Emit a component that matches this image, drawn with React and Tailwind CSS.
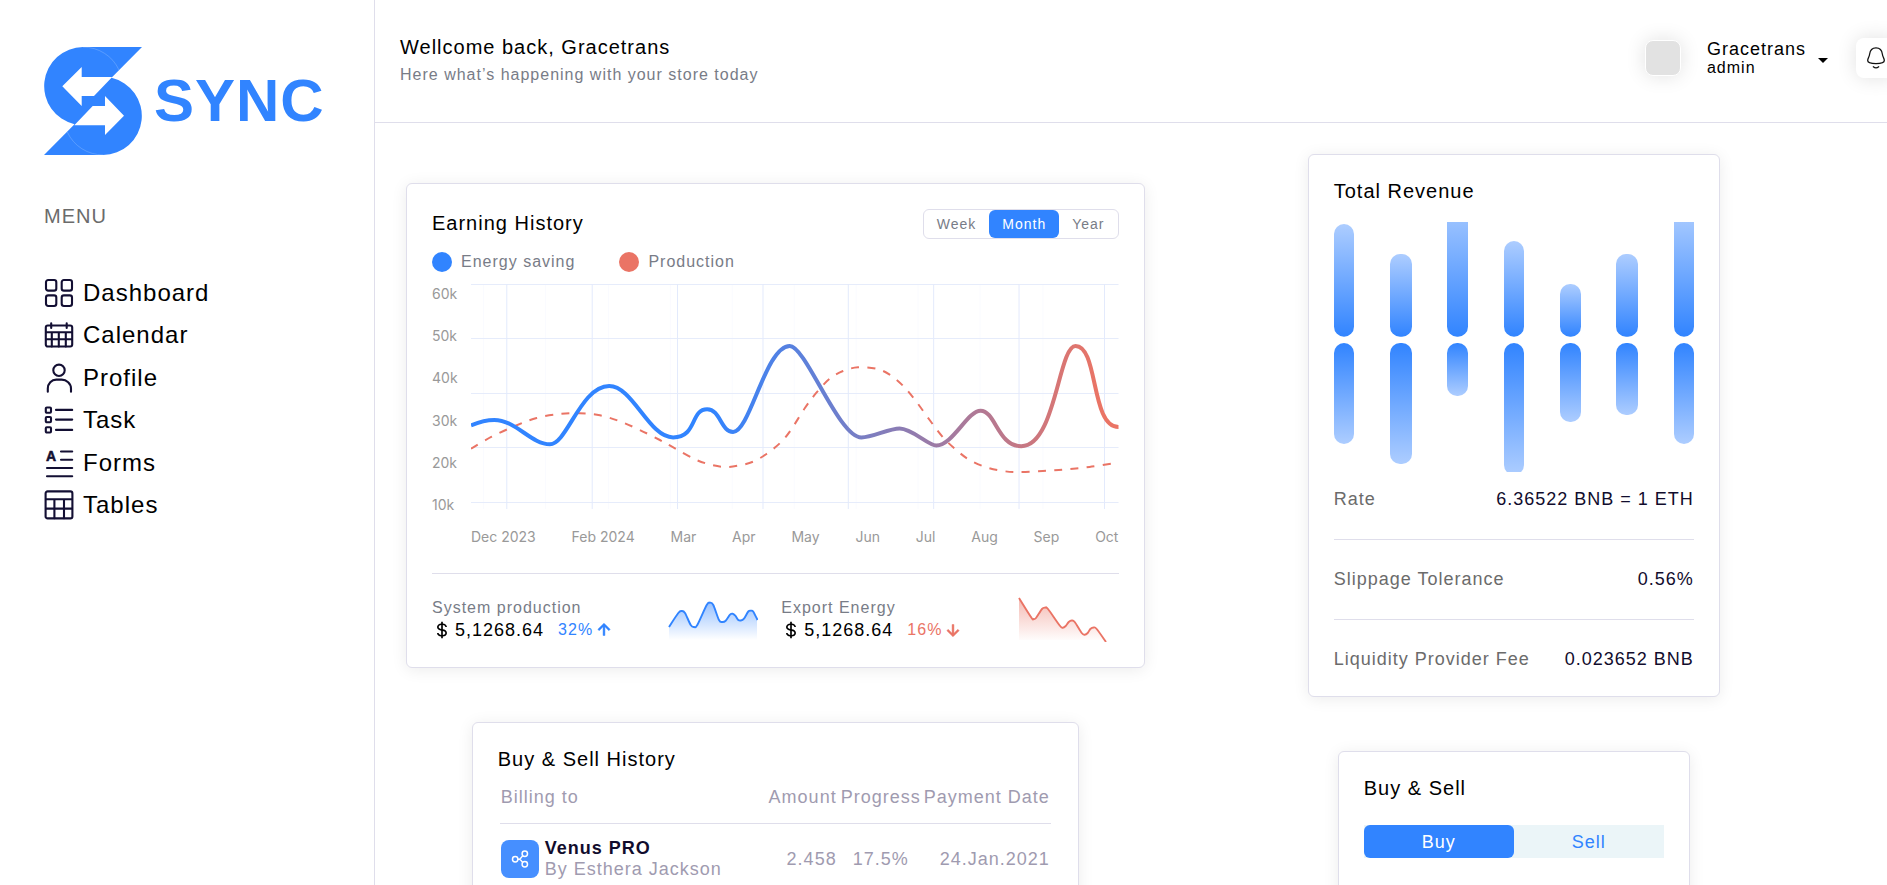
import React, { useState } from "react";
import { BiDollar, BiUpArrowAlt, BiDownArrowAlt } from "react-icons/bi";

/* Catmull-Rom spline through a list of points, as an SVG path */
function smooth(points) {
  let d = `M${points[0][0]} ${points[0][1]}`;
  for (let i = 0; i < points.length - 1; i++) {
    const a = points[i - 1] || points[i];
    const b = points[i];
    const c = points[i + 1];
    const e = points[i + 2] || c;
    d += ` C${b[0] + (c[0] - a[0]) / 6} ${b[1] + (c[1] - a[1]) / 6} ${c[0] - (e[0] - b[0]) / 6} ${c[1] - (e[1] - b[1]) / 6} ${c[0]} ${c[1]}`;
  }
  return d;
}

const SAVING =
  "M0 141.3C8 138 16 136 23.3 136C45 136 60 160.3 79 160.3C96 160.3 110 102 138.3 102C162 102 178 153.4 202.3 153.4" +
  "C226.5 153.4 219.3 125.3 236.3 125.3C249.7 125.3 250 147.9 262.3 147.9C279.3 147.9 294.9 62 319 62" +
  "C335 62 368 153.5 390.7 153.5C402 153.5 418 144.5 429 144.5C441.5 144.5 457.5 161.5 465.7 161.5" +
  "C482 161.5 497 126.7 510 126.7C525 126.7 527 162.2 550.7 162.2C585 162.2 588 62 605 62C628 62 620 143 648 143";

const PRODUCTION = [
  [0, 164.7], [20.7, 152.7], [44, 142], [65.7, 134], [89, 130], [109, 129.3], [129, 131.3], [149, 137.3], [169, 146], [189, 156],
  [205.7, 165.3], [225.7, 176], [242.3, 181.3], [255.7, 183], [269, 181.3], [282.3, 177.7], [295.7, 170], [309, 159.3],
  [319, 147.7], [334, 124.3], [345.7, 108.7], [359, 94.7], [372.3, 87], [387.3, 83.3], [405.7, 84.7], [419, 90.7],
  [432.3, 101.7], [445.7, 117.7], [459, 136], [472.3, 153.3], [485.7, 166], [499, 176], [515.7, 183.3], [532.3, 187],
  [547.3, 188], [572.3, 187], [595.7, 185.3], [619, 183], [642.3, 179.3], [648, 178],
];

const ROWS_AT = [0.5, 54.5, 109.5, 163.5, 218.5];
const COLS_AT = [35.8, 121.3, 206.7, 292.2, 377.6, 463, 548.5, 634];
const FINE_COLS_AT = [12, 74, 137, 199, 261, 323, 385, 447, 509, 572];

const SPARK_UP = [
  [1, 30], [10.3, 16], [13.7, 14], [17, 16], [22.7, 28], [26, 30], [29.3, 28], [38.7, 8], [42, 5.7], [45.3, 8], [51, 23],
  [54.3, 25], [57.7, 23.7], [62, 17.7], [64.7, 16.7], [67.3, 18.7], [70, 22.7], [72.7, 23.5], [76, 21.7], [80.3, 14.5],
  [83, 13.7], [85.3, 14.7], [89.5, 23],
];
const SPARK_DOWN = [
  [1, 1], [13.3, 20.5], [15.7, 22], [18, 21], [24, 12], [27, 10.7], [30, 12], [41.7, 28.5], [44.7, 30.7], [47.7, 29],
  [50.7, 25], [53.7, 23.5], [56.7, 25], [63.7, 36], [66.7, 37.7], [69.7, 36], [72.3, 32], [75.7, 30.5], [78.7, 32], [88, 45],
];

const BARS = [
  { x: 0, w: 20, up: 2, down: 222 },
  { x: 56, w: 22, up: 32, down: 242 },
  { x: 113, w: 21, up: -24, down: 174 },
  { x: 170, w: 20, up: 19, down: 253 },
  { x: 226, w: 21, up: 62, down: 200 },
  { x: 282, w: 22, up: 32, down: 193 },
  { x: 340, w: 20, up: -12, down: 222 },
];

const MONTHS = ["Dec 2023", "Feb 2024", "Mar", "Apr", "May", "Jun", "Jul", "Aug", "Sep", "Oct"];
const LEVELS = ["60k", "50k", "40k", "30k", "20k", "10k"];

function Icon({ children }) {
  return (
    <svg
      viewBox="0 0 30 30"
      className="size-[30px] shrink-0 text-[#130f33]"
      fill="none"
      stroke="currentColor"
      strokeWidth="2.1"
      strokeLinecap="round"
      strokeLinejoin="round"
      aria-hidden="true"
    >
      {children}
    </svg>
  );
}

const MENU = [
  {
    label: "Dashboard",
    icon: (
      <Icon>
        <rect x="2" y="2" width="10.3" height="10.6" rx="2.2" />
        <rect x="17.7" y="2" width="10.3" height="10.6" rx="2.2" />
        <rect x="2" y="17.4" width="10.3" height="10.6" rx="2.2" />
        <rect x="17.7" y="17.4" width="10.3" height="10.6" rx="2.2" />
      </Icon>
    ),
  },
  {
    label: "Calendar",
    icon: (
      <Icon>
        <rect x="1.8" y="5.5" width="26.4" height="21" rx="2" />
        <path d="M7.2 3.3V8M22.7 3.3V8M2 12.3H28M2 19.2H28M7.8 12.3V26.4M14.8 12.3V26.4M21.8 12.3V26.4" />
      </Icon>
    ),
  },
  {
    label: "Profile",
    icon: (
      <Icon>
        <circle cx="15" cy="7.3" r="5.7" />
        <path d="M3.8 28.8V25.5C3.8 20.5 7.5 16.6 12.3 16.6H17.7C22.5 16.6 27 20.5 27 25.5V28.8" />
      </Icon>
    ),
  },
  {
    label: "Task",
    icon: (
      <Icon>
        <rect x="1.8" y="2.5" width="5.2" height="5.2" rx="1" />
        <rect x="1.8" y="12" width="5.2" height="5.2" rx="1" />
        <rect x="1.8" y="22.3" width="5.2" height="5.2" rx="1" />
        <path d="M12 4.9H28.2M12 14.6H28.2M12 24.9H28.2" />
      </Icon>
    ),
  },
  {
    label: "Forms",
    icon: (
      <Icon>
        <text
          x="7"
          y="12.6"
          textAnchor="middle"
          fontSize="14"
          fontWeight="700"
          letterSpacing="0"
          fill="currentColor"
          strokeWidth="0.6"
        >
          A
        </text>
        <path d="M17 3.5H28.2M17 11.7H28.2M3 20H28.2M3 28.2H28.2" />
      </Icon>
    ),
  },
  {
    label: "Tables",
    icon: (
      <Icon>
        <rect x="1.6" y="1.4" width="26.8" height="27" rx="2" />
        <path d="M2 9.3H28M2 18.6H28M10.4 9.3V28.2M20 9.3V28.2" />
      </Icon>
    ),
  },
];

function Logo() {
  return (
    <svg viewBox="0 0 98 108" className="h-[108px] w-[98px] shrink-0" aria-hidden="true">
      <path fill="#3184ff" d="M98 0L67.5 30.8A39.1 39.1 0 0 1 59 108H0L30.5 77.2A39.1 39.1 0 0 1 39 0Z" />
      <path fill="none" stroke="#7fb2ff" strokeWidth=".5" d="M39 0.2A39 39 0 0 1 75 23M59.3 107.8A39 39 0 0 1 23.3 85" />
      <path fill="#fff" d="M18.3 39.3L37.7 20V30H68.2L50 49H37.7V59Z" />
      <path fill="#fff" d="M80 68.7L61 88V78.3H30.3L48.7 59H61V49Z" />
    </svg>
  );
}

function Sidebar() {
  return (
    <aside className="w-[375px] shrink-0 border-r border-[#dfdeeb] pt-[47px] pl-11">
      <div className="flex items-center gap-3">
        <Logo />
        <span className="text-[60px] leading-none font-bold text-[#3184ff]">SYNC</span>
      </div>
      <h2 className="mt-[47px] text-xl leading-7 text-[#6b6b6b]">MENU</h2>
      <nav className="mt-12 flex h-[242px] flex-col justify-between">
        {MENU.map((item) => (
          <a key={item.label} href="#" className="flex items-center gap-[9px] text-2xl leading-[30px] text-black">
            {item.icon}
            {item.label}
          </a>
        ))}
      </nav>
    </aside>
  );
}

function Header() {
  return (
    <header className="flex items-center justify-between border-b border-[#dfdeeb] pt-[33px] pb-[35px] pl-[25px]">
      <div className="flex flex-col gap-0.5">
        <h1 className="text-xl leading-7">Wellcome back, Gracetrans</h1>
        <p className="text-base leading-6 text-[#787c87]">Here what’s happening with your store today</p>
      </div>
      <div className="-mr-[9px] mb-1 flex shrink-0 items-center">
        <div className="size-9 rounded-lg border border-white bg-[#e2e2e2] shadow-[0_0_20px_rgba(0,0,0,0.12)]" />
        <button type="button" className="ml-[26px] flex items-center gap-3 text-left">
          <span className="flex flex-col">
            <span className="text-lg leading-5">Gracetrans</span>
            <span className="text-base leading-[18px]">admin</span>
          </span>
          <svg viewBox="0 0 10 5" className="mt-1 h-[5px] w-2.5" aria-hidden="true">
            <path d="M0 0H10L5 5Z" />
          </svg>
        </button>
        <button
          type="button"
          aria-label="Notifications"
          className="ml-7 flex size-10 items-center justify-center rounded-lg bg-white shadow-[0_0_20px_rgba(0,0,0,0.12)]"
        >
          <svg viewBox="0 0 24 24" className="size-6" fill="none" stroke="#111" strokeWidth="1.3" strokeLinecap="round" aria-hidden="true">
            <path d="M12 1.8C8 1.8 6 4.6 5.6 8.2C5.3 11 3.7 12.3 3.7 14.6C3.7 17 7 17.7 12 17.7S20.3 17 20.3 14.6C20.3 12.3 18.7 11 18.4 8.2C18 4.6 16 1.8 12 1.8Z" />
            <path d="M9.3 20.8Q12 23 14.7 20.8" />
          </svg>
        </button>
      </div>
    </header>
  );
}

function Card({ className, children }) {
  return (
    <section className={`rounded-md border border-[#dfdeeb] bg-white p-[25px] shadow-[0_2px_16px_rgba(0,0,0,0.08)] ${className}`}>
      {children}
    </section>
  );
}

function Range() {
  const [active, setActive] = useState("Month");
  return (
    <div className="flex h-[30px] rounded-md border border-[#dfdeeb] text-sm">
      {["Week", "Month", "Year"].map((name) => (
        <button
          key={name}
          type="button"
          aria-pressed={active === name}
          onClick={() => setActive(name)}
          className={active === name ? "rounded-md bg-[#3184ff] px-[13px] text-white" : "rounded-md px-[13px] text-[#787c87]"}
        >
          {name}
        </button>
      ))}
    </div>
  );
}

function EarningChart() {
  return (
    <svg viewBox="0 0 648 226" preserveAspectRatio="none" className="h-[226px] w-full" fill="none" role="img" aria-label="Earning history">
      <defs>
        <linearGradient id="earning" gradientUnits="userSpaceOnUse" x1="0" y1="0" x2="648" y2="0">
          <stop offset="0.37" stopColor="#3184ff" />
          <stop offset="0.97" stopColor="#ea7465" />
        </linearGradient>
      </defs>
      {FINE_COLS_AT.map((x) => (
        <path key={x} d={`M${x + 0.5} 0V225`} stroke="#fafbff" />
      ))}
      {ROWS_AT.map((y) => (
        <path key={y} d={`M0 ${y}H648`} stroke="#e6ecfb" />
      ))}
      {COLS_AT.map((x) => (
        <path key={x} d={`M${x} 0V225`} stroke="#e3eafc" />
      ))}
      <path d={smooth(PRODUCTION)} stroke="#ea7465" strokeWidth="2" strokeDasharray="8 8.3" />
      <path d={SAVING} stroke="url(#earning)" strokeWidth="4" />
    </svg>
  );
}

function Spark({ id, points, color, edge }) {
  const line = smooth(points);
  return (
    <svg viewBox="0 0 90 45" className="h-[45px] w-[90px] shrink-0" fill="none" aria-hidden="true">
      <defs>
        <linearGradient id={id} x1="0" y1="0" x2="0" y2="1">
          <stop offset="0" stopColor={color} stopOpacity="0.5" />
          <stop offset="1" stopColor={color} stopOpacity="0" />
        </linearGradient>
        <clipPath id={`${id}-clip`}>
          <rect x="0" y="0" width={edge} height="43" />
        </clipPath>
      </defs>
      <path d={`${line} V43 H1 Z`} fill={`url(#${id})`} clipPath={`url(#${id}-clip)`} />
      <path d={line} stroke={color} strokeWidth="1.9" />
    </svg>
  );
}

function Metric({ label, value, change, tone, arrow, children }) {
  return (
    <div className="flex items-center justify-between pr-[11px]">
      <div>
        <p className="text-base leading-5 text-[#787c87]">{label}</p>
        <div className="flex items-center leading-6">
          <BiDollar className="mr-[3px] size-5" />
          <span className="text-lg leading-6">{value}</span>
          <span className={`ml-3.5 flex items-center text-base leading-6 ${tone}`}>
            {change}
            {arrow}
          </span>
        </div>
      </div>
      {children}
    </div>
  );
}

function EarningHistory() {
  return (
    <Card className="w-full">
      <div className="flex items-start justify-between">
        <h2 className="text-xl leading-7">Earning History</h2>
        <Range />
      </div>
      <ul className="mt-[13px] flex items-center gap-11 text-base leading-5 text-[#787c87]">
        <li className="flex items-center gap-[9px]">
          <span className="size-5 rounded-full bg-[#3184ff]" />
          Energy saving
        </li>
        <li className="flex items-center gap-[9px]">
          <span className="size-5 rounded-full bg-[#ea7465]" />
          Production
        </li>
      </ul>
      <div className="mt-3 flex font-[Inter,sans-serif] text-sm leading-5 tracking-normal text-[#999]">
        <div className="flex h-[231px] w-[39px] shrink-0 flex-col justify-between">
          {LEVELS.map((level) => (
            <span key={level}>{level}</span>
          ))}
        </div>
        <div className="grow">
          <EarningChart />
          <div className="mt-[17px] flex justify-between">
            {MONTHS.map((month) => (
              <span key={month}>{month}</span>
            ))}
          </div>
        </div>
      </div>
      <div className="mt-[26px] grid grid-cols-2 gap-3 border-t border-[#dfdeeb] pt-[23px]">
        <Metric
          label="System production"
          value="5,1268.64"
          change="32%"
          tone="text-[#3184ff]"
          arrow={<BiUpArrowAlt className="size-[22px]" stroke="currentColor" strokeWidth="0.5" />}
        >
          <Spark id="spark-up" points={SPARK_UP} color="#3184ff" edge={89} />
        </Metric>
        <Metric
          label="Export Energy"
          value="5,1268.64"
          change="16%"
          tone="text-[#ea7465]"
          arrow={<BiDownArrowAlt className="size-[22px]" stroke="currentColor" strokeWidth="0.5" />}
        >
          <Spark id="spark-down" points={SPARK_DOWN} color="#ea7465" edge={88} />
        </Metric>
      </div>
    </Card>
  );
}

function TradeHistory() {
  return (
    <Card className="w-[607px]">
      <h2 className="text-xl leading-[22px]">Buy &amp; Sell History</h2>
      <div className="px-0.5">
        <table className="w-full border-collapse text-lg leading-6 text-[#9f9bb0]">
          <thead>
            <tr className="border-b border-[#dfdeeb]">
              <th className="w-full px-px pt-[15px] pb-[14px] text-left font-normal">Billing to</th>
              <th className="px-0.5 pt-[15px] pb-[14px] text-right font-normal">Amount</th>
              <th className="px-0.5 pt-[15px] pb-[14px] text-center font-normal">Progress</th>
              <th className="px-px pt-[15px] pb-[14px] text-right font-normal whitespace-nowrap">Payment Date</th>
            </tr>
          </thead>
          <tbody>
            <tr>
              <td className="px-px pt-3.5">
                <div className="flex items-center gap-1.5">
                  <span className="flex size-[38px] items-center justify-center rounded-lg bg-[#468fff]">
                    <svg viewBox="0 0 18 18" className="size-[18px]" fill="none" stroke="#fff" strokeWidth="1.5" aria-hidden="true">
                      <circle cx="4.2" cy="9.2" r="2.7" />
                      <circle cx="13.8" cy="3.8" r="2.7" />
                      <circle cx="13.8" cy="14.2" r="2.7" />
                      <path d="M6.9 9.2H8C10 9.2 9.8 7.4 11.8 5.7M8 9.2C10 9.2 9.8 10.8 11.8 12.4" />
                    </svg>
                  </span>
                  <span className="flex flex-col leading-[21px]">
                    <b className="text-[#110c2d]">Venus PRO</b>
                    <span>By Esthera Jackson</span>
                  </span>
                </div>
              </td>
              <td className="px-0.5 pt-3.5 text-right">2.458</td>
              <td className="px-0.5 pt-3.5 text-center">17.5%</td>
              <td className="px-px pt-3.5 text-right">24.Jan.2021</td>
            </tr>
          </tbody>
        </table>
      </div>
    </Card>
  );
}

function Revenue() {
  return (
    <Card className="w-[412px]">
      <h2 className="text-xl leading-[22px]">Total Revenue</h2>
      <svg viewBox="0 0 360 250" className="mt-5 h-[250px] w-full" role="img" aria-label="Total revenue">
        <defs>
          <linearGradient id="bar-up" x1="0" y1="0" x2="0" y2="1">
            <stop offset="0" stopColor="#adcdff" />
            <stop offset="1" stopColor="#3184ff" />
          </linearGradient>
          <linearGradient id="bar-down" x1="0" y1="0" x2="0" y2="1">
            <stop offset="0" stopColor="#3184ff" />
            <stop offset="1" stopColor="#adcdff" />
          </linearGradient>
        </defs>
        {BARS.map((bar) => (
          <g key={bar.x}>
            <rect x={bar.x} y={bar.up} width={bar.w} height={114.7 - bar.up} rx="10" fill="url(#bar-up)" />
            <rect x={bar.x} y="121" width={bar.w} height={bar.down - 121} rx="10" fill="url(#bar-down)" />
          </g>
        ))}
      </svg>
      <dl className="mt-[15px] flex flex-col text-lg leading-6">
        {[
          ["Rate", "6.36522 BNB = 1 ETH"],
          ["Slippage Tolerance", "0.56%"],
          ["Liquidity Provider Fee", "0.023652 BNB"],
        ].map(([name, value]) => (
          <div
            key={name}
            className="flex justify-between border-b border-[#dfdeeb] pt-[27px] pb-7 first:pt-0 last:border-b-0 last:pb-0"
          >
            <dt className="text-[#6b6b6b]">{name}</dt>
            <dd className="text-[#110c2d]">{value}</dd>
          </div>
        ))}
      </dl>
    </Card>
  );
}

function Trade() {
  const [side, setSide] = useState("Buy");
  return (
    <Card className="w-[352px] pb-16">
      <h2 className="text-xl leading-[22px]">Buy &amp; Sell</h2>
      <div className="mt-[26px] grid grid-cols-2 bg-[#ebf5f8] text-lg leading-6">
        {["Buy", "Sell"].map((name) => (
          <button
            key={name}
            type="button"
            aria-pressed={side === name}
            onClick={() => setSide(name)}
            className={side === name ? "h-[33px] rounded-md bg-[#3184ff] text-white" : "h-[33px] rounded-md text-[#3184ff]"}
          >
            {name}
          </button>
        ))}
      </div>
    </Card>
  );
}

export default function App() {
  return (
    <div className="flex h-screen overflow-hidden bg-white font-['Liberation_Sans',Arial,sans-serif] tracking-[1px] text-black">
      <Sidebar />
      <div className="min-w-0 grow">
        <Header />
        <main className="grid grid-cols-2 pr-1 pl-[31px]">
          <div className="flex flex-col items-center gap-[54px] pt-[60px]">
            <EarningHistory />
            <TradeHistory />
          </div>
          <div className="flex flex-col items-center gap-[54px] pt-[31px]">
            <Revenue />
            <Trade />
          </div>
        </main>
      </div>
    </div>
  );
}
